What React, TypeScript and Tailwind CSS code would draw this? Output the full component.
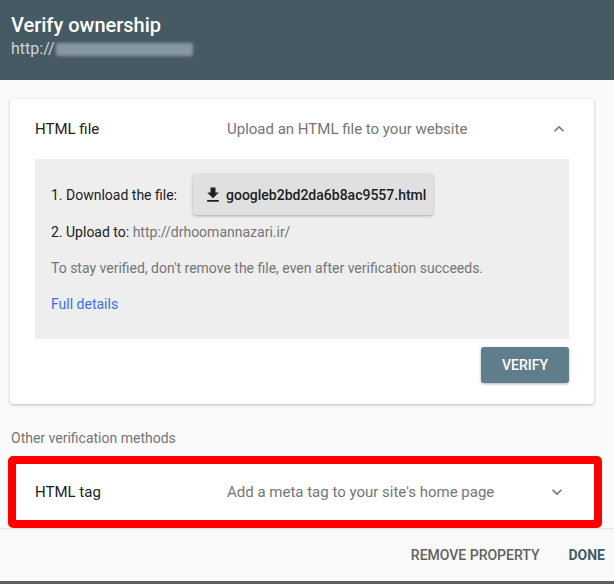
import React from "react";

const ChevronUp = () => (
  <svg width="20" height="20" viewBox="0 0 24 24" className="text-[#757575]">
    <path fill="currentColor" d="M12 8l-6 6 1.41 1.41L12 10.83l4.59 4.58L18 14z" />
  </svg>
);

const ChevronDown = () => (
  <svg width="20" height="20" viewBox="0 0 24 24" className="text-[#757575]">
    <path fill="currentColor" d="M16.59 8.59L12 13.17 7.41 8.59 6 10l6 6 6-6z" />
  </svg>
);

const DownloadIcon = () => (
  <svg width="20" height="20" viewBox="0 0 24 24" className="text-[#212121]">
    <path fill="currentColor" d="M19 9h-4V3H9v6H5l7 7 7-7zM5 18v2h14v-2H5z" />
  </svg>
);

export default function App() {
  return (
    <div
      className="w-[614px] h-[584px] bg-[#fafafa] flex flex-col overflow-hidden"
      style={{ fontFamily: "Roboto, 'Liberation Sans', sans-serif" }}
    >
      {/* Header */}
      <div className="h-[80px] shrink-0 bg-[#465a64] px-[11px] pt-[12px]">
        <div className="text-white text-[20px] font-medium leading-[26px]">Verify ownership</div>
        <div className="flex items-center h-[20px] mt-[1px]">
          <span className="text-[#cdd5da] text-[16px] leading-[20px]">http://</span>
          <span className="ml-[1px] w-[137px] h-[13px] bg-[#8797a0] blur-[1.5px] rounded-[2px]" />
        </div>
      </div>

      {/* Main */}
      <div className="h-[448px] shrink-0 flex flex-col">
        <div className="ml-[10px] mt-[19px] w-[584px] bg-white rounded-[3px] shadow-[0_1px_3px_rgba(0,0,0,0.25)] px-[25px] pb-[21px]">
          <div className="h-[60px] flex items-center">
            <div className="w-[192px] text-[15px] text-[#212121]">HTML file</div>
            <div className="flex-1 text-[15px] text-[#757575]">Upload an HTML file to your website</div>
            <div className="w-[20px] flex items-center justify-center">
              <ChevronUp />
            </div>
          </div>
          <div className="bg-[#eeeeee] px-[16px] pt-[15px] pb-[25px] text-[14px] leading-[20px]">
            <div className="flex items-center">
              <span className="text-[#212121] w-[142px]">1. Download the file:</span>
              <div className="h-[41px] w-[240px] bg-[#e0e0e0] rounded-[3px] shadow-[0_1px_3px_rgba(0,0,0,0.3)] flex items-center pl-[10px] gap-[3px]">
                <DownloadIcon />
                <span className="text-[#212121] font-medium text-[14px]">googleb2bd2da6b8ac9557.html</span>
              </div>
            </div>
            <div className="mt-[7px]">
              <span className="text-[#212121]">2. Upload to: </span>
              <span className="text-[#757575]">http://drhoomannazari.ir/</span>
            </div>
            <div className="mt-[16px] text-[#757575]">
              To stay verified, don't remove the file, even after verification succeeds.
            </div>
            <div className="mt-[16px] text-[#3f6ef0]">Full details</div>
          </div>
          <div className="flex justify-end mt-[8px]">
            <button className="h-[36px] w-[88px] bg-[#607d8b] text-white text-[14px] font-medium rounded-[3px] shadow-[0_1px_3px_rgba(0,0,0,0.3)]">
              VERIFY
            </button>
          </div>
        </div>

        <div className="ml-[11px] mt-[24px] text-[14px] leading-[20px] text-[#757575]">
          Other verification methods
        </div>

        <div className="ml-[8px] mt-[8px] w-[594px] h-[72px] border-[8px] border-[#ff0000] rounded-[5px] bg-white flex items-center pl-[19px] pr-[27px]">
          <div className="w-[192px] text-[15px] text-[#212121]">HTML tag</div>
          <div className="flex-1 text-[15px] text-[#757575]">Add a meta tag to your site's home page</div>
          <div className="w-[20px] flex items-center justify-center">
            <ChevronDown />
          </div>
        </div>
      </div>

      {/* Footer */}
      <div className="h-[53px] shrink-0 bg-[#f9f9f9] border-t border-[#e6e6e6] flex items-center justify-end pr-[9px] gap-[29px] text-[14px] font-medium">
        <span className="text-[#616161]">REMOVE PROPERTY</span>
        <span className="text-[#455a64] font-bold">DONE</span>
      </div>
      <div className="h-[3px] shrink-0 bg-[#5f5f5f]" />
    </div>
  );
}
